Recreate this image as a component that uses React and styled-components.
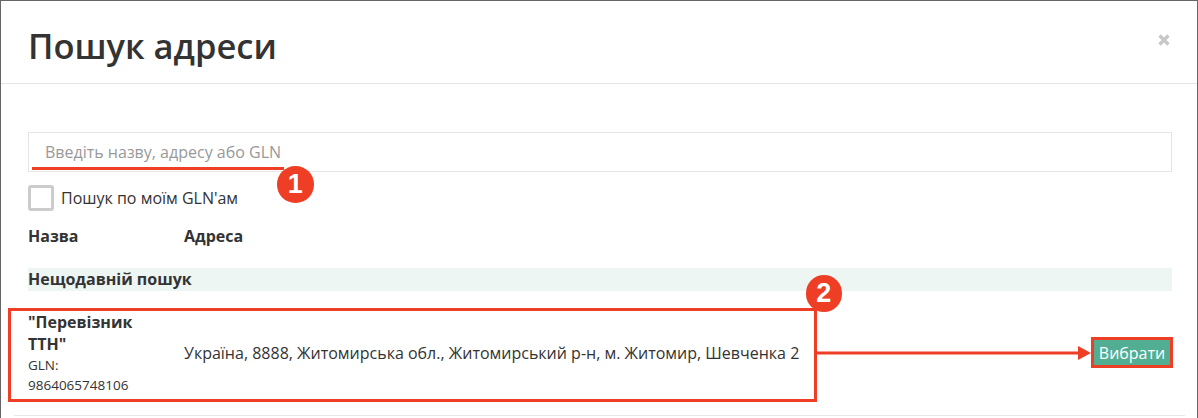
import React from "react";
import styled, { createGlobalStyle } from "styled-components";

const Global = createGlobalStyle`
  html, body { margin: 0; padding: 0; background: #fff; }
  body { font-family: "Open Sans", "Liberation Sans", sans-serif; color: #333; overflow: hidden; }
`;
const Backdrop = styled.div`
  width: 1198px; height: 418px; box-sizing: border-box; background: #666;
  padding: 1px 1px 0 1px; overflow: hidden;
`;
const Modal = styled.div`
  position: relative; background: #fff; height: 417px; overflow: hidden;
`;
const Header = styled.header`
  height: 83px; box-sizing: border-box; border-bottom: 1px solid #e5e5e5;
  display: flex; align-items: center; justify-content: space-between;
  padding: 0 26px 0 27px;
`;
const Title = styled.h1`
  margin: 0; font-size: 34.5px; font-weight: 600; line-height: 46px; color: #333;
  padding-top: 8px;
`;
const Close = styled.svg`
  display: block; margin-bottom: 5px;
`;
const Body = styled.div`
  padding: 48px 25px 0 27px;
`;
const SearchInput = styled.input`
  display: block; width: 100%; height: 40px; box-sizing: border-box;
  border: 1px solid #e5e5e5; padding: 0 16px; font: 16px "Open Sans", sans-serif; outline: none;
  &::placeholder { color: #999; opacity: 1; }
`;
const CheckRow = styled.label`
  display: flex; align-items: center; gap: 7px; margin-top: 13px; font-size: 16px; line-height: 26px;
`;
const CheckBox = styled.span`
  width: 26px; height: 26px; box-sizing: border-box; border: 3px solid #ccc; border-radius: 3px;
`;
const Columns = styled.div`
  display: grid; grid-template-columns: 156px 1fr; margin-top: 15px; font-size: 16px; font-weight: 700; line-height: 20px;
`;
const GroupHead = styled.div`
  margin-top: 22px; height: 23px; background: #edf6f3; font-size: 16px; font-weight: 700; line-height: 23px;
`;
const Row = styled.div`
  display: grid; grid-template-columns: 156px 1fr auto; align-items: center; margin-top: 19px; height: 85px;
`;
const NameCell = styled.div`
  width: 110px;
`;
const Name = styled.div`
  font-size: 16px; font-weight: 700; line-height: 22px;
`;
const Gln = styled.div`
  font-size: 13.5px; line-height: 20px;
`;
const Address = styled.div`
  font-size: 16px;
`;
const SelectButton = styled.button`
  border: 0; background: #52ae92; color: #fff; font: 16px "Open Sans", sans-serif;
  width: 76px; height: 25px; padding: 0; margin-right: 2px;
`;
const Footer = styled.div`
  position: absolute; left: 13px; right: 12px; top: 414px; height: 1px; background: #e8e8e8;
`;
const Underline = styled.div`
  position: absolute; left: 31px; top: 166px; width: 252px; height: 3px; background: #ee3f26;
`;
const Badge = styled.div`
  position: absolute; left: ${p => p.$x}px; top: ${p => p.$y}px; width: 36.5px; height: 36.5px; border-radius: 50%;
  background: #ee3f26; color: #fff; font: 700 27px/36.5px "Liberation Sans", Arial, sans-serif; text-align: center;
`;
const Frame = styled.div`
  position: absolute; left: ${p => p.$x}px; top: ${p => p.$y}px; width: ${p => p.$w}px; height: ${p => p.$h}px;
  box-sizing: border-box; border: 3px solid #ee3f26;
`;
const Arrow = styled.svg`
  position: absolute; left: 815px; top: 342.5px;
`;

export default function App() {
  return (
    <Backdrop>
      <Global />
      <Modal>
        <Header>
          <Title>Пошук адреси</Title>
          <Close width="14" height="14" viewBox="0 0 14 14" aria-label="Закрити">
            <path d="M2.5 2.5 L11.5 11.5 M11.5 2.5 L2.5 11.5" stroke="#c8c8c8" strokeWidth="3.4" fill="none" />
          </Close>
        </Header>
        <Body>
          <SearchInput placeholder="Введіть назву, адресу або GLN" />
          <CheckRow><CheckBox />Пошук по моїм GLN'ам</CheckRow>
          <Columns><div>Назва</div><div>Адреса</div></Columns>
          <GroupHead>Нещодавній пошук</GroupHead>
          <Row>
            <NameCell>
              <Name>"Перевізник ТТН"</Name>
              <Gln>GLN: 9864065748106</Gln>
            </NameCell>
            <Address>Україна, 8888, Житомирська обл., Житомирський р-н, м. Житомир, Шевченка 2</Address>
            <SelectButton>Вибрати</SelectButton>
          </Row>
        </Body>
        <Footer />
        <Underline />
        <Badge $x={276} $y={165}>1</Badge>
        <Frame $x={7} $y={307} $w={809} $h={94} />
        <Badge $x={804.5} $y={274}>2</Badge>
        <Frame $x={1090} $y={336} $w={82} $h={31} />
        <Arrow width="276" height="20" viewBox="0 0 276 20">
          <rect x="0" y="7.5" width="264" height="3" fill="#ee3f26" />
          <path d="M262 2 L275 9 L262 16 Z" fill="#ee3f26" />
        </Arrow>
      </Modal>
    </Backdrop>
  );
}
